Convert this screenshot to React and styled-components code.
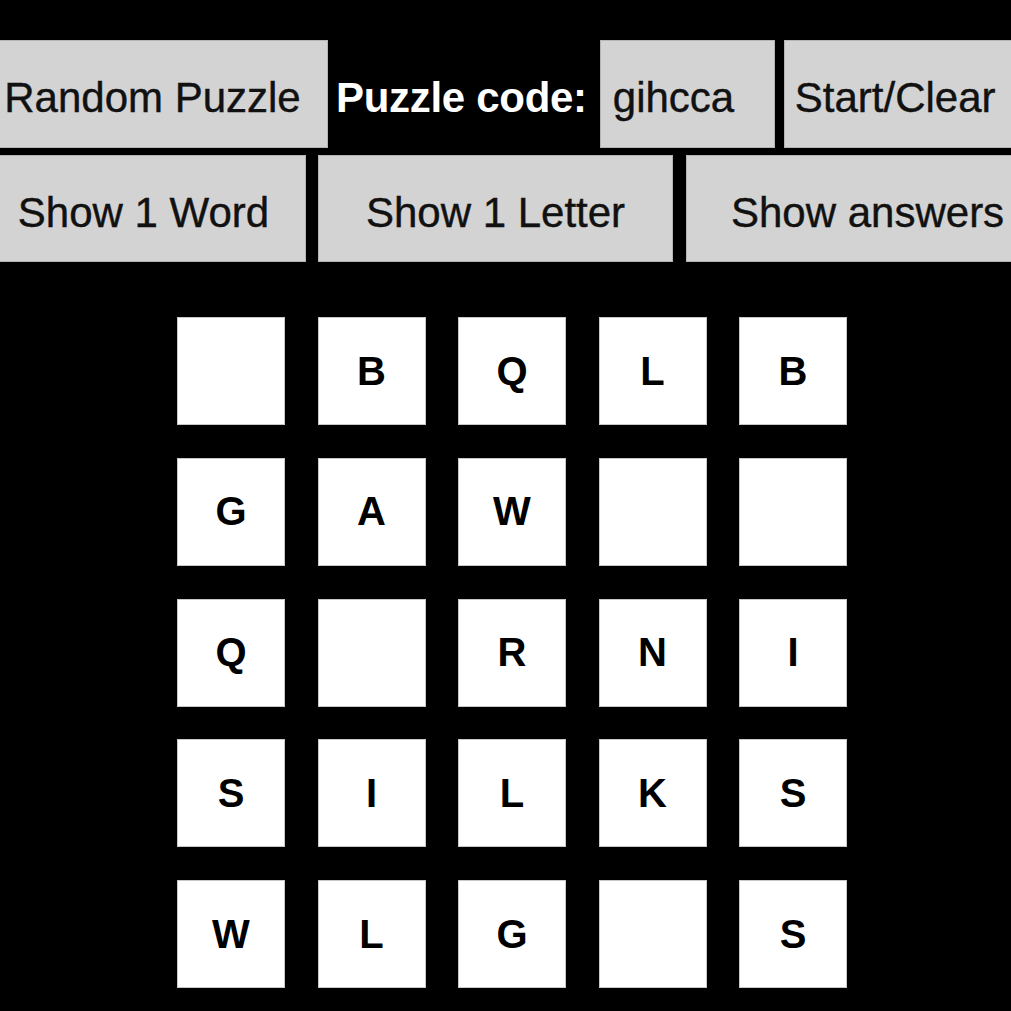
import React from 'react';
import styled, { createGlobalStyle } from 'styled-components';

const GlobalStyle = createGlobalStyle`
  html, body {
    margin: 0;
    padding: 0;
    background: #000;
    overflow: hidden;
  }
  body {
    font-family: "Liberation Sans", Arial, Helvetica, sans-serif;
  }
`;

const Page = styled.div`
  width: 1011px;
  height: 1011px;
  padding-top: 40px;
  box-sizing: border-box;
  overflow: hidden;
  background: #000;
`;

const Toolbar = styled.div`
  display: flex;
  align-items: center;
  height: ${p => p.$height}px;
  margin-left: ${p => p.$shift}px;
  margin-bottom: ${p => p.$below || 0}px;
  white-space: nowrap;
`;

const Button = styled.button`
  flex: none;
  box-sizing: border-box;
  width: ${p => p.$width}px;
  height: 100%;
  margin-left: ${p => p.$gap || 0}px;
  padding: ${p => (p.$left != null ? `8px 0 0 ${p.$left}px` : '8px 0 0')};
  text-align: ${p => (p.$left != null ? 'left' : 'center')};
  background: #d3d3d3;
  border: 1px solid #b4b4b4;
  border-radius: 0;
  color: #111;
  font-family: "Liberation Sans", Arial, Helvetica, sans-serif;
  font-size: 42px;
  -webkit-text-stroke: 0.4px #111;
  cursor: pointer;
`;

const Label = styled.span`
  flex: none;
  margin: 0 13px 0 8px;
  padding-top: 8px;
  color: #fff;
  font-weight: bold;
  font-size: 42px;
  letter-spacing: -0.3px;
`;

const CodeBox = styled.div`
  flex: none;
  box-sizing: border-box;
  width: 175px;
  height: 100%;
  display: flex;
  align-items: center;
  padding: 8px 0 0 12px;
  background: #d3d3d3;
  border: 1px solid #b4b4b4;
  color: #111;
  font-size: 42px;
  -webkit-text-stroke: 0.4px #111;
`;

const Board = styled.div`
  display: grid;
  grid-template-columns: repeat(5, 108px);
  grid-auto-rows: 108px;
  column-gap: 32.5px;
  row-gap: 32.75px;
  margin: 55px 0 0 177px;
`;

const Tile = styled.div`
  box-sizing: border-box;
  display: flex;
  align-items: center;
  justify-content: center;
  background: #fff;
  border: 1px solid #c8c8c8;
  color: #000;
  font-weight: bold;
  font-size: 40px;
`;

const letters = [
  ['', 'B', 'Q', 'L', 'B'],
  ['G', 'A', 'W', '', ''],
  ['Q', '', 'R', 'N', 'I'],
  ['S', 'I', 'L', 'K', 'S'],
  ['W', 'L', 'G', '', 'S'],
];

export default function App() {
  return (
    <Page>
      <GlobalStyle />
      <Toolbar $height={108} $shift={-23} $below={7}>
        <Button $width={351}>Random Puzzle</Button>
        <Label>Puzzle code:</Label>
        <CodeBox>gihcca</CodeBox>
        <Button $width={260} $gap={9} $left={10}>Start/Clear</Button>
      </Toolbar>
      <Toolbar $height={107} $shift={-19}>
        <Button $width={325}>Show 1 Word</Button>
        <Button $width={355} $gap={12}>Show 1 Letter</Button>
        <Button $width={360} $gap={13} $left={44}>Show answers</Button>
      </Toolbar>
      <Board>
        {letters.flat().map((ch, i) => (
          <Tile key={i}>{ch}</Tile>
        ))}
      </Board>
    </Page>
  );
}
